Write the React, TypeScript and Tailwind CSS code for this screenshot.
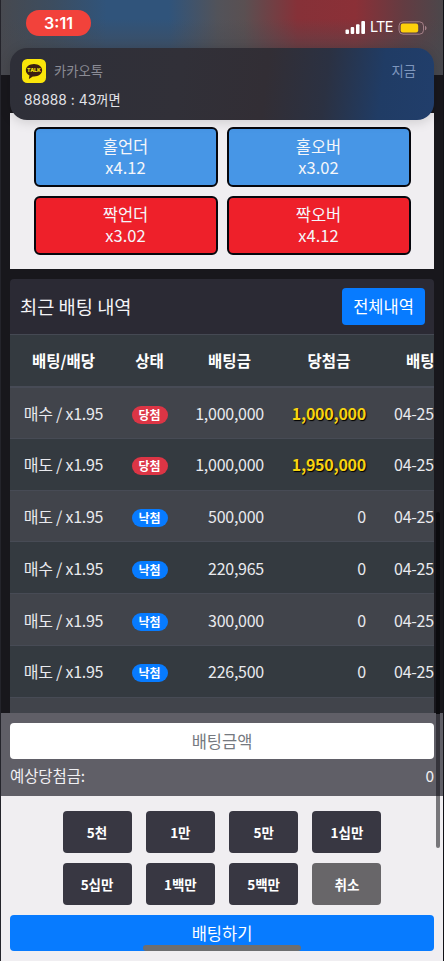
const bets = [
  { type: "매수", win: true, amount: "1,000,000", prize: "1,000,000" },
  { type: "매도", win: true, amount: "1,000,000", prize: "1,950,000" },
  { type: "매도", win: false, amount: "500,000", prize: "0" },
  { type: "매수", win: false, amount: "220,965", prize: "0" },
  { type: "매도", win: false, amount: "300,000", prize: "0" },
  { type: "매도", win: false, amount: "226,500", prize: "0" },
];

const options = [
  { name: "홀언더", rate: "x4.12", color: "bg-[#4796e6]" },
  { name: "홀오버", rate: "x3.02", color: "bg-[#4796e6]" },
  { name: "짝언더", rate: "x3.02", color: "bg-[#ee202a]" },
  { name: "짝오버", rate: "x4.12", color: "bg-[#ee202a]" },
];

const amounts = ["5천", "1만", "5만", "1십만", "5십만", "1백만", "5백만", "취소"];

const StatusBar = () => {
  return (
    <div className="relative h-[75px] shrink-0 overflow-hidden bg-[#4b4a4e]">
      <div className="absolute inset-0 bg-[linear-gradient(90deg,#47494f_0%,#3c4d60_12%,#30547b_24%,#30547b_38%,#52535a_49%,#5a5052_55%,#863138_67%,#8b3037_80%,#633c42_91%,#4b474b_100%)]" />
      <div className="absolute inset-0 bg-[linear-gradient(180deg,transparent_25%,rgba(71,72,78,0.5)_64%,#47484e_95%)]" />
      <div className="relative flex justify-between pl-[26px] pr-[17px] pt-[10px]">
        <div className="flex h-[26px] w-[65px] items-center justify-center rounded-full bg-[#f2423b] font-[Inter] text-[16px] font-semibold text-white">
          3:11
        </div>
        <div className="flex h-[35px] items-center gap-1 text-white">
          <svg width="21" height="13" viewBox="0 0 21 13" fill="currentColor">
            <rect x="0.5" y="8.5" width="3.5" height="4.5" rx="1" />
            <rect x="5.7" y="6" width="3.5" height="7" rx="1" />
            <rect x="11" y="3.2" width="3.5" height="9.8" rx="1" />
            <rect x="16.3" y="0" width="3.7" height="13" rx="1" />
          </svg>
          <span className="font-[Inter] text-[14.5px] leading-none tracking-[-0.6px]">LTE</span>
          <svg className="ml-px" width="29" height="14" viewBox="0 0 29 14">
            <rect x="1" y="0.8" width="24.5" height="12.4" rx="4" fill="none" stroke="#a58088" />
            <rect x="2.7" y="2.5" width="17.5" height="9" rx="2.2" fill="#fdd00b" />
            <path d="M27 4.7c2 .8 2 3.8 0 4.6z" fill="#a58088" />
          </svg>
        </div>
      </div>
    </div>
  );
};

const Notification = () => {
  return (
    <div className="absolute left-[10px] top-12 h-[72px] w-[424px] rounded-[17px] bg-[linear-gradient(97deg,#2e2f38_0%,#313038_40%,#322e35_60%,#2b3142_74%,#203c65_87%,#213e6b_100%)] px-3 pt-[11px] shadow-[0_2px_12px_rgba(0,0,0,0.15)]">
      <div className="flex h-6 items-center">
        <svg width="24" height="24" viewBox="0 0 25 25">
          <rect width="25" height="25" rx="5.5" fill="#fae50a" />
          <path d="M12.5 5.2c-4.8 0-8.5 2.9-8.5 6.5 0 2.4 1.5 4.4 3.8 5.5l-.6 3c-.1.4.2.5.5.3l3.5-2.4c.4.1.9.1 1.3.1 4.7 0 8.5-2.9 8.5-6.5s-3.8-6.5-8.5-6.5z" fill="#3a1e12" />
          <text x="12.5" y="14" textAnchor="middle" fill="#fae50a" fontFamily="Inter" fontSize="5.4" fontWeight="800">TALK</text>
        </svg>
        <span className="ml-[8px] text-[13.3px] text-[#8b8c95]">카카오톡</span>
        <span className="ml-auto mr-[6px] text-[13.3px] text-[#7e96bd]">지금</span>
      </div>
      <p className="ml-[2px] mt-[7px] whitespace-nowrap font-[Inter,'Noto_Sans_CJK_KR',sans-serif] text-[13.8px] leading-5 tracking-[0.05px] text-[#e4e4e9]">
        88888 : 43<span className="text-[13.2px]">꺼면</span>
      </p>
    </div>
  );
};

const BetOptions = () => {
  return (
    <div className="grid h-[156px] shrink-0 grid-cols-[184px_184px] content-start justify-center gap-x-[9px] gap-y-[9px] bg-[#f0eef1] pt-[14px]">
      {options.map((option) => (
        <div key={option.name} className={`flex h-[59.5px] items-center justify-center rounded-[6px] border-2 border-[#06070d] text-center text-[16.5px] leading-[21px] text-[#f5f6fa] ${option.color}`}>
          <p>
            {option.name}
            <br />
            {option.rate}
          </p>
        </div>
      ))}
    </div>
  );
};

const History = () => {
  return (
    <div className="mt-[10px] min-h-0 flex-1 overflow-hidden rounded-t-[4px] bg-[#2b2a34]">
      <div className="flex h-[55px] items-center justify-between pl-[10px] pr-[9px]">
        <h2 className="text-[18.7px] text-[#f3f3f6]">최근 배팅 내역</h2>
        <button className="h-[37px] w-[83px] rounded-[4px] bg-[#077bff] text-[16.5px] text-white">전체내역</button>
      </div>
      <table className="w-[514px] table-fixed border-collapse text-[16px] tracking-[-0.25px] text-[#e9eaee]">
        <colgroup>
          <col className="w-[107px]" />
          <col className="w-[65px]" />
          <col className="w-[95px]" />
          <col className="w-[103px]" />
          <col className="w-[144px]" />
        </colgroup>
        <thead>
          <tr className="h-[52px] border-t border-b-2 border-t-[#454953] border-b-[#474b56] bg-[#343a40] text-[15.5px] tracking-normal text-white">
            <th className="font-bold">배팅/배당</th>
            <th className="font-bold">상태</th>
            <th className="font-bold">배팅금</th>
            <th className="pl-[1px] font-bold">당첨금</th>
            <th className="pl-[26px] text-left font-bold">배팅시간</th>
          </tr>
        </thead>
        <tbody>
          {bets.map((bet, i) => (
            <tr key={i} className="h-[51.8px] border-b border-[#474b55] odd:bg-[#41444b] even:bg-[#343a40]">
              <td className="text-center">{bet.type} / x1.95</td>
              <td className="text-center">
                <span className={`inline-flex h-[18px] w-9 items-center justify-center rounded-full text-[12px] font-bold leading-none tracking-normal text-white ${bet.win ? "bg-[#dc3545]" : "bg-[#077bff]"}`}>
                  {bet.win ? "당첨" : "낙첨"}
                </span>
              </td>
              <td className="pr-[13px] text-right">{bet.amount}</td>
              <td className={bet.win ? "pr-[14px] text-right font-bold text-[#f8d411] [text-shadow:1px_1px_1px_#000]" : "pr-[14px] text-right"}>
                {bet.prize}
              </td>
              <td className="pl-[14px]">04-25</td>
            </tr>
          ))}
          <tr className="h-[52px] bg-[#41444b]">
            <td colSpan={5} />
          </tr>
        </tbody>
      </table>
    </div>
  );
};

const BetForm = () => {
  return (
    <div className="h-[248px] shrink-0 bg-[#f0eef1]">
      <div className="h-[83px] bg-[#605f67] px-[10px] pt-[10px]">
        <input className="block h-[36px] w-full rounded-[4px] bg-white text-center text-[16.5px] placeholder:text-[#757980]" placeholder="배팅금액" />
        <div className="mt-[5px] flex h-6 items-center justify-between text-[15.5px] tracking-[-0.1px] text-[#f0f0f3]">
          <span>예상당첨금:</span>
          <span>0</span>
        </div>
      </div>
      <div className="grid grid-cols-[69px_69px_69px_69px] justify-center gap-x-[14.3px] gap-y-[9.5px] pt-[14.5px]">
        {amounts.map((amount) => (
          <button key={amount} className={`h-[42.5px] rounded-[4px] text-[13.5px] font-bold leading-5 text-white ${amount === "취소" ? "bg-[#686669]" : "bg-[#383742]"}`}>
            {amount}
          </button>
        ))}
      </div>
      <div className="px-[10px] pt-[9.5px]">
        <button className="h-[36.5px] w-full rounded-[4px] bg-[#077bff] pt-px text-[16.5px] text-white">배팅하기</button>
      </div>
    </div>
  );
};

const App = () => {
  return (
    <div className="relative flex h-[961px] w-[444px] flex-col overflow-hidden bg-[#18171c] font-['Noto_Sans_CJK_KR',sans-serif]">
      <StatusBar />
      <div className="flex min-h-0 flex-1 flex-col px-[10px] pt-[38px]">
        <BetOptions />
        <History />
      </div>
      <BetForm />
      <Notification />
      <div className="absolute left-[143px] top-[945px] h-[6px] w-[158px] rounded-[3px] bg-[#6d6e70]" />
      <div className="absolute left-[436px] top-[512px] h-[336px] w-[4px] rounded-full bg-[linear-gradient(#0b0b0e_0,#0b0b0e_202px,#35343b_202px,#35343b_284px,#77767a_284px)]" />
      <div className="absolute left-0 top-0 h-full w-px bg-[#24242b]" />
      <div className="absolute right-0 top-0 h-full w-px bg-[#111116]" />
    </div>
  );
};

export default App;
